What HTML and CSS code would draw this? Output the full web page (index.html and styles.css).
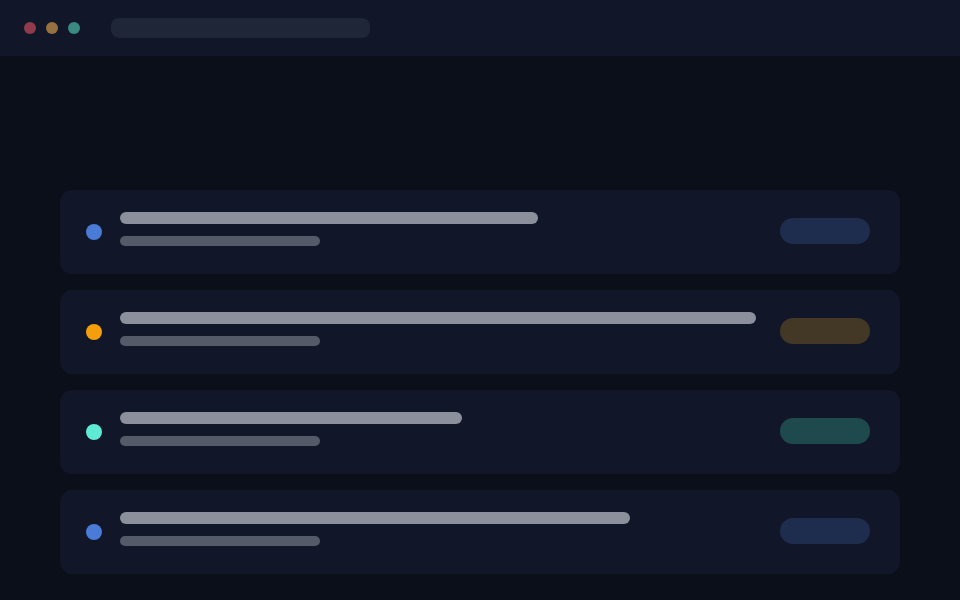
FILE: index.html
```html
<!DOCTYPE html>
<html lang="en">
<head>
    <meta charset="UTF-8">
    <meta name="viewport" content="width=device-width, initial-scale=1.0">
    <title>Lista</title>
    <link rel="stylesheet" href="styles.css">
</head>
<body>
    <!-- Barra da janela -->
    <div class="topbar">
        <span class="light light-red"></span>
        <span class="light light-amber"></span>
        <span class="light light-teal"></span>
        <div class="address"></div>
    </div>

    <div class="container">
        <div class="row">
            <span class="dot dot-blue"></span>
            <div class="lines">
                <div class="line-title" style="width: 418px"></div>
                <div class="line-sub"></div>
            </div>
            <span class="pill pill-blue"></span>
        </div>
        <div class="row">
            <span class="dot dot-amber"></span>
            <div class="lines">
                <div class="line-title" style="width: 636px"></div>
                <div class="line-sub"></div>
            </div>
            <span class="pill pill-amber"></span>
        </div>
        <div class="row">
            <span class="dot dot-teal"></span>
            <div class="lines">
                <div class="line-title" style="width: 342px"></div>
                <div class="line-sub"></div>
            </div>
            <span class="pill pill-teal"></span>
        </div>
        <div class="row">
            <span class="dot dot-blue"></span>
            <div class="lines">
                <div class="line-title" style="width: 510px"></div>
                <div class="line-sub"></div>
            </div>
            <span class="pill pill-blue"></span>
        </div>
    </div>
</body>
</html>
```

FILE: styles.css
```css
body {
    margin: 0;
    background-color: #0a0f1a;
    font-family: "Liberation Sans", Arial, sans-serif;
    height: 600px;
    overflow: hidden;
}
.topbar {
    height: 56px;
    background-color: #111729;
    display: flex;
    align-items: center;
    padding-left: 24px;
    gap: 10px;
}
.light {
    width: 12px;
    height: 12px;
    border-radius: 50%;
}
.light-red { background-color: #8f3b4b; }
.light-amber { background-color: #97713f; }
.light-teal { background-color: #3a8a82; }
.address {
    width: 259px;
    height: 20px;
    margin-left: 21px;
    border-radius: 8px;
    background-color: #1f2638;
}
.container {
    padding: 134px 60px 0;
    display: flex;
    flex-direction: column;
    gap: 16px;
}
.row {
    height: 84px;
    box-sizing: border-box;
    padding: 0 30px 0 26px;
    background-color: #111729;
    border-radius: 12px;
    display: flex;
    align-items: center;
}
.dot {
    width: 16px;
    height: 16px;
    border-radius: 50%;
    flex-shrink: 0;
}
.dot-blue { background-color: #4a7bd6; }
.dot-amber { background-color: #f59e0b; }
.dot-teal { background-color: #5eead4; }
.lines {
    flex: 1;
    margin-left: 18px;
    padding-bottom: 6px;
}
.line-title {
    height: 12px;
    border-radius: 6px;
    background-color: #8b909c;
}
.line-sub {
    width: 200px;
    height: 10px;
    margin-top: 12px;
    border-radius: 5px;
    background-color: #545a68;
}
.pill {
    width: 90px;
    height: 26px;
    border-radius: 13px;
    margin-bottom: 2px;
    flex-shrink: 0;
}
.pill-blue { background-color: #1e2d4d; }
.pill-amber { background-color: #433726; }
.pill-teal { background-color: #1f4a4d; }
```
